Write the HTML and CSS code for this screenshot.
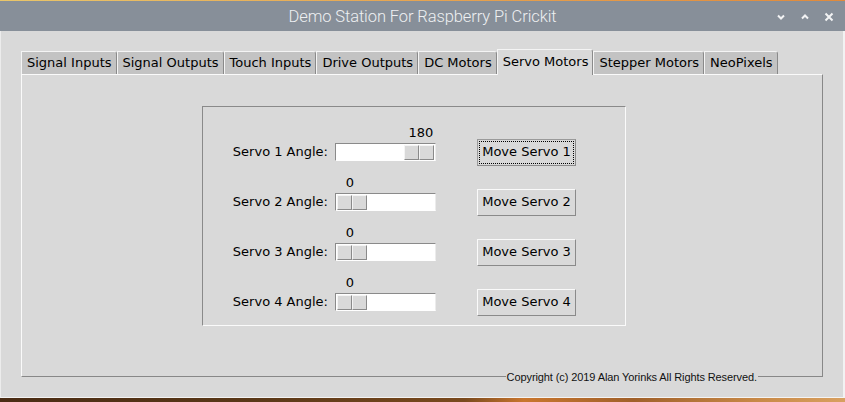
FILE: index.html
```html
<!DOCTYPE html>
<html>
<head>
<meta charset="utf-8">
<link rel="stylesheet" href="styles.css">
</head>
<body>
<div class="window">
  <div class="topline"></div>
  <div class="titlebar">
    <div></div>
    <div class="title">Demo Station For Raspberry Pi Crickit</div>
    <div class="controls">
      <svg class="ctl" width="10" height="10" viewBox="0 0 10 10"><path d="M2 3.5 L5 6.5 L8 3.5" fill="none" stroke="#f2f3f4" stroke-width="2"/></svg>
      <svg class="ctl" width="10" height="10" viewBox="0 0 10 10"><path d="M2 6.5 L5 3.5 L8 6.5" fill="none" stroke="#f2f3f4" stroke-width="2"/></svg>
      <svg class="ctl" width="10" height="10" viewBox="0 0 10 10"><path d="M1.5 1.5 L8.5 8.5 M8.5 1.5 L1.5 8.5" fill="none" stroke="#f2f3f4" stroke-width="2"/></svg>
    </div>
  </div>
  <div class="body">
    <div class="tabs">
      <div class="tab">Signal Inputs</div>
      <div class="tab">Signal Outputs</div>
      <div class="tab">Touch Inputs</div>
      <div class="tab">Drive Outputs</div>
      <div class="tab">DC Motors</div>
      <div class="tab selected">Servo Motors</div>
      <div class="tab">Stepper Motors</div>
      <div class="tab">NeoPixels</div>
    </div>
    <div class="pane">
      <div class="frame">
        <div class="servo">
          <div class="value"><span class="val" style="margin-left: calc((100% - 30px) * 1)">180</span></div>
          <div class="label">Servo 1 Angle:</div>
          <div class="trough"><div class="thumb" style="margin-left: calc((100% - 31px) * 1)"><span></span><span></span></div></div>
          <button class="btn focus">Move Servo 1</button>
        </div>
        <div class="servo">
          <div class="value"><span class="val" style="margin-left: 0">0</span></div>
          <div class="label">Servo 2 Angle:</div>
          <div class="trough"><div class="thumb" style="margin-left: 0"><span></span><span></span></div></div>
          <button class="btn">Move Servo 2</button>
        </div>
        <div class="servo">
          <div class="value"><span class="val" style="margin-left: 0">0</span></div>
          <div class="label">Servo 3 Angle:</div>
          <div class="trough"><div class="thumb" style="margin-left: 0"><span></span><span></span></div></div>
          <button class="btn">Move Servo 3</button>
        </div>
        <div class="servo">
          <div class="value"><span class="val" style="margin-left: 0">0</span></div>
          <div class="label">Servo 4 Angle:</div>
          <div class="trough"><div class="thumb" style="margin-left: 0"><span></span><span></span></div></div>
          <button class="btn">Move Servo 4</button>
        </div>
      </div>
      <div class="copyright">Copyright (c) 2019 Alan Yorinks All Rights Reserved.</div>
    </div>
  </div>
  <div class="wallpaper"></div>
</div>
</body>
</html>
```
FILE: styles.css
```css
* { box-sizing: border-box; }
html, body { margin: 0; padding: 0; }
body {
  width: 845px;
  height: 402px;
  overflow: hidden;
  background: #5a3a1e;
  font-family: "DejaVu Sans", sans-serif;
  font-size: 13px;
  color: #000;
}
.window {
  width: 845px;
  height: 402px;
  display: flex;
  flex-direction: column;
}
.topline {
  height: 1px;
  background: linear-gradient(90deg, #e9c66a, #e6a451 50%, #e08a3c);
}
.titlebar {
  height: 30px;
  background: #878f99;
  display: grid;
  grid-template-columns: 1fr auto 1fr;
  align-items: center;
}
.title {
  font-family: "Roboto", sans-serif;
  font-weight: 300;
  font-size: 16.5px;
  color: #eef0f2;
  letter-spacing: -0.1px;
  padding-top: 1px;
}
.controls {
  display: flex;
  justify-content: flex-end;
  gap: 14px;
  padding-right: 11px;
  padding-top: 2px;
}
.ctl { display: block; }
.body {
  height: 367px;
  background: #d9d9d9;
  border-left: 1px solid #ececec;
  border-right: 2px solid #f2f2f2;
  border-bottom: 1px solid #f4f4f4;
  padding: 18px 20px 0 20px;
  position: relative;
}
.tabs {
  display: flex;
  align-items: flex-end;
  height: 25px;
}
.tab {
  height: 23px;
  line-height: 22px;
  padding: 0 4px 0 5px;
  background: #c3c3c3;
  border-top: 1px solid #f4f4f4;
  border-left: 1px solid #f4f4f4;
  border-right: 1px solid #8a8a8a;
  border-top-right-radius: 3px;
  white-space: nowrap;
}
.tab.selected {
  height: 26px;
  line-height: 24px;
  margin-bottom: -1px;
  background: #d9d9d9;
  position: relative;
  z-index: 1;
}
.pane {
  width: 802px;
  height: 303px;
  border-top: 1px solid #fafafa;
  border-left: 1px solid #fafafa;
  border-right: 1px solid #888;
  border-bottom: 1px solid #888;
  position: relative;
  padding: 31px 0 0 180px;
}
.frame {
  width: 424px;
  height: 220px;
  border-top: 1px solid #8a8a8a;
  border-left: 1px solid #8a8a8a;
  border-right: 1px solid #fafafa;
  border-bottom: 1px solid #fafafa;
  padding-top: 14px;
  display: flex;
  flex-direction: column;
  gap: 5px;
}
.servo {
  display: grid;
  grid-template-columns: 125px 7px 101px 41px 99px;
  grid-template-rows: 18px 27px;
}
.value {
  grid-column: 3;
  grid-row: 1;
  align-self: end;
  display: flex;
  line-height: 13px;
}
.val {
  width: 30px;
  text-align: center;
  flex: none;
}
.label {
  grid-column: 1;
  grid-row: 2;
  text-align: right;
  align-self: start;
  margin-top: 5px;
  line-height: 16px;
}
.trough {
  grid-column: 3;
  grid-row: 2;
  align-self: start;
  margin-top: 4px;
  height: 18px;
  background: #fff;
  border-top: 1px solid #8a8a8a;
  border-left: 1px solid #8a8a8a;
  border-right: 1px solid #ececec;
  border-bottom: 1px solid #ffffff;
  padding: 1px 0 0 1px;
  display: flex;
}
.thumb {
  display: flex;
  height: 15px;
  flex: none;
}
.thumb span {
  width: 15px;
  height: 15px;
  background: #d9d9d9;
  border-top: 1px solid #f4f4f4;
  border-left: 1px solid #f4f4f4;
  border-right: 1px solid #8a8a8a;
  border-bottom: 1px solid #8a8a8a;
}
.btn {
  grid-column: 5;
  grid-row: 2;
  align-self: start;
  height: 27px;
  width: 99px;
  margin: 0;
  padding: 0 0 1px 0;
  font-family: "DejaVu Sans", sans-serif;
  font-size: 13px;
  line-height: 16px;
  color: #000;
  background: #d9d9d9;
  border-top: 1px solid #fafafa;
  border-left: 1px solid #fafafa;
  border-right: 1px solid #8a8a8a;
  border-bottom: 1px solid #8a8a8a;
  border-radius: 0;
}
.btn.focus {
  outline: 1px dotted #000;
  outline-offset: -3px;
  border-top-color: #9a9a9a;
  border-left-color: #9a9a9a;
}
.copyright {
  position: absolute;
  right: 64px;
  bottom: -8px;
  background: #d9d9d9;
  padding: 0 1px;
  font-family: "Liberation Sans", Arial, sans-serif;
  font-size: 11px;
  letter-spacing: -0.1px;
  line-height: 14px;
  color: #111;
}
.wallpaper {
  flex: 1;
  background: linear-gradient(90deg, #4a2c14 0%, #5a3818 30%, #7a4a1e 55%, #c9762e 62%, #a0602a 75%, #c98a48 90%, #d8a060 100%);
}
```
